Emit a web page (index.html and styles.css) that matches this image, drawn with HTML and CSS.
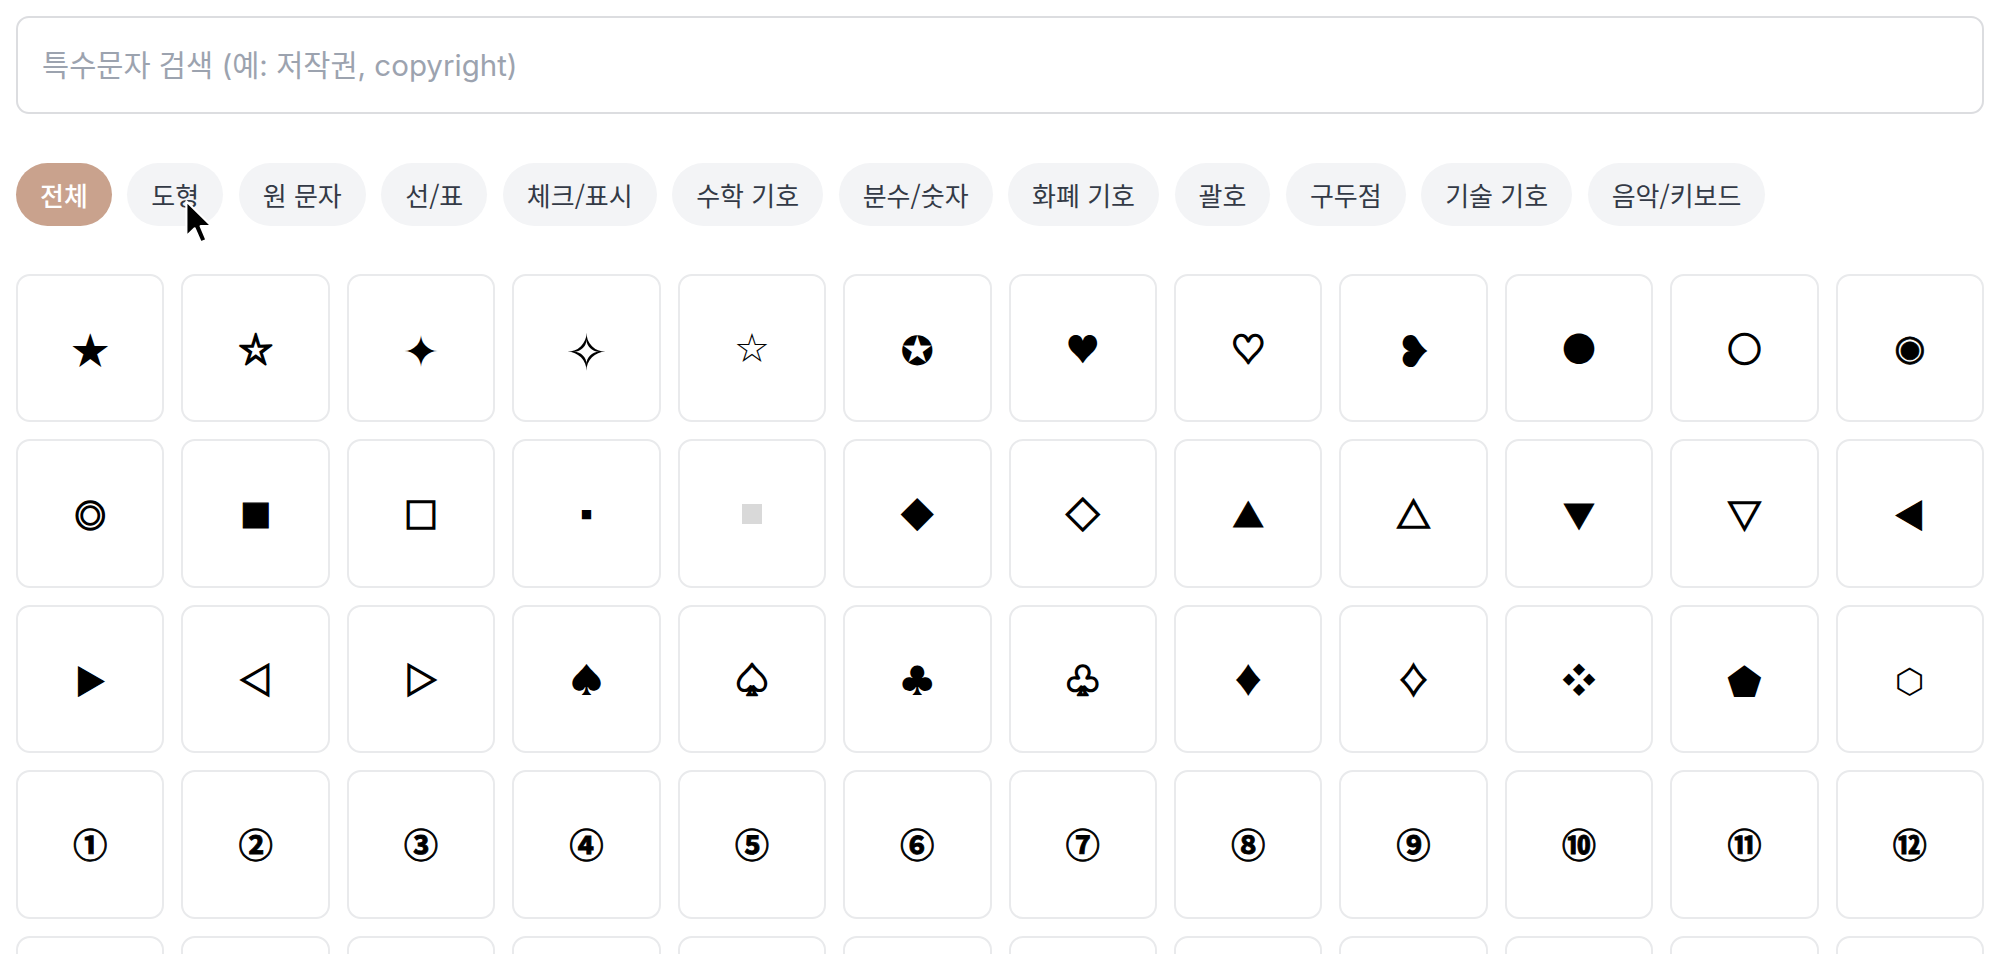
FILE: index.html
```html
<!DOCTYPE html>
<html lang="ko">
<head>
<meta charset="utf-8">
<title>특수문자</title>
<link rel="stylesheet" href="styles.css">
</head>
<body>
<main class="page">
  <input class="search" type="text" placeholder="특수문자 검색 (예: 저작권, copyright)">

  <nav class="chips">
    <button class="chip active">전체</button>
    <button class="chip">도형</button>
    <button class="chip">원 문자</button>
    <button class="chip">선/표</button>
    <button class="chip">체크/표시</button>
    <button class="chip">수학 기호</button>
    <button class="chip">분수/숫자</button>
    <button class="chip">화폐 기호</button>
    <button class="chip">괄호</button>
    <button class="chip">구두점</button>
    <button class="chip">기술 기호</button>
    <button class="chip">음악/키보드</button>
  </nav>

  <ul class="grid">
    <li class="cell star">★</li>
    <li class="cell outline">☆</li>
    <li class="cell sparkle">✦</li>
    <li class="cell sparkle-o">✧</li>
    <li class="cell star-thin">☆</li>
    <li class="cell badge">✪</li>
    <li class="cell">♥</li>
    <li class="cell outline">♡</li>
    <li class="cell bullet">❥</li>
    <li class="cell">●</li>
    <li class="cell outline">○</li>
    <li class="cell fisheye">◉</li>

    <li class="cell ring outline">◎</li>
    <li class="cell solid">■</li>
    <li class="cell outline">□</li>
    <li class="cell">▪</li>
    <li class="cell"><span class="swatch">▫</span></li>
    <li class="cell">◆</li>
    <li class="cell outline">◇</li>
    <li class="cell solid">▲</li>
    <li class="cell outline">△</li>
    <li class="cell solid">▼</li>
    <li class="cell outline">▽</li>
    <li class="cell solid">◀</li>

    <li class="cell solid">▶</li>
    <li class="cell outline">◁</li>
    <li class="cell outline">▷</li>
    <li class="cell">♠</li>
    <li class="cell outline">♤</li>
    <li class="cell">♣</li>
    <li class="cell outline">♧</li>
    <li class="cell">♦</li>
    <li class="cell outline">♢</li>
    <li class="cell">❖</li>
    <li class="cell penta">⬟</li>
    <li class="cell hexa">⬡</li>

    <li class="cell num">①</li>
    <li class="cell num">②</li>
    <li class="cell num">③</li>
    <li class="cell num">④</li>
    <li class="cell num">⑤</li>
    <li class="cell num">⑥</li>
    <li class="cell num">⑦</li>
    <li class="cell num">⑧</li>
    <li class="cell num">⑨</li>
    <li class="cell num">⑩</li>
    <li class="cell num">⑪</li>
    <li class="cell num">⑫</li>

    <li class="cell num">⑬</li>
    <li class="cell num">⑭</li>
    <li class="cell num">⑮</li>
    <li class="cell num">⑯</li>
    <li class="cell num">⑰</li>
    <li class="cell num">⑱</li>
    <li class="cell num">⑲</li>
    <li class="cell num">⑳</li>
    <li class="cell num">❶</li>
    <li class="cell num">❷</li>
    <li class="cell num">❸</li>
    <li class="cell num">❹</li>
  </ul>

  <!-- mouse pointer hovering the second category -->
  <svg class="pointer" width="31" height="46" viewBox="0 0 14 21" aria-hidden="true">
    <path d="M1 1 L1 17 L4.8 13.4 L7.6 19.8 L10.2 18.7 L7.5 12.4 L12.6 12.4 Z" fill="#000" stroke="#fff" stroke-width="1" stroke-linejoin="round"/>
  </svg>
</main>
</body>
</html>
```

FILE: styles.css
```css
* {
  box-sizing: border-box;
}

body {
  margin: 0;
  background: #ffffff;
  font-family: Inter, "Noto Sans CJK KR", sans-serif;
}

.page {
  position: relative;
  padding: 16px;
}

/* search field */
.search {
  display: block;
  width: 100%;
  height: 98px;
  padding: 0 24px;
  border: 2px solid #dcdde0;
  border-radius: 13px;
  background: #fff;
  font-family: Inter, "Noto Sans CJK KR", sans-serif;
  font-size: 29.5px;
  color: #111827;
  outline: none;
}

.search::placeholder {
  color: #9ca3af;
}

/* category filter */
.chips {
  display: flex;
  gap: 15.5px;
  margin-top: 49px;
}

.chip {
  display: inline-flex;
  align-items: center;
  height: 63px;
  padding: 0 24px;
  border: 0;
  border-radius: 999px;
  background: #f3f4f6;
  color: #333a46;
  font-family: "Noto Sans CJK KR", sans-serif;
  font-size: 26px;
  font-weight: 400;
  cursor: pointer;
}

.chip.active {
  background: #c9a28d;
  color: #ffffff;
  font-weight: 500;
}

/* symbol grid */
.grid {
  list-style: none;
  margin: 48px 0 0;
  padding: 0;
  display: grid;
  grid-template-columns: repeat(12, 1fr);
  gap: 17px;
}

.cell {
  aspect-ratio: 1 / 1;
  display: flex;
  align-items: center;
  justify-content: center;
  border: 2px solid #e9eaec;
  border-radius: 14px;
  background: #fff;
  color: #000;
  font-family: "Noto Sans CJK KR", "DejaVu Sans", sans-serif;
  font-size: 34px;
  font-weight: 700;
  line-height: 1;
  cursor: pointer;
}

/* heavier strokes for the hollow shapes */
.cell.outline {
  -webkit-text-stroke: 1.6px #000;
}

.cell.solid {
  -webkit-text-stroke: 1.2px #000;
  font-size: 31px;
}

.cell.num {
  -webkit-text-stroke: 0.9px #000;
}

.cell.star {
  font-size: 38px;
}

.cell.sparkle {
  font-size: 44px;
}

.cell.sparkle-o {
  font-size: 50px;
  font-weight: 400;
}

.cell.star-thin {
  font-family: "DejaVu Sans", sans-serif;
  font-size: 40px;
  font-weight: 400;
}

.cell.badge {
  font-size: 40px;
}

.cell.bullet {
  font-size: 44px;
}

.cell.fisheye {
  font-family: "DejaVu Sans", sans-serif;
  font-size: 36px;
  font-weight: 400;
  -webkit-text-stroke: 0.8px #000;
}

.cell.ring {
  font-size: 31px;
}

.cell.penta {
  font-size: 40px;
}

.cell.hexa {
  font-weight: 400;
}

/* light grey filled tile for the small square */
.swatch {
  display: inline-block;
  width: 20px;
  height: 20px;
  background: #d9d9d9;
  color: transparent;
  font-size: 12px;
  line-height: 20px;
  text-align: center;
}

.pointer {
  position: absolute;
  left: 184px;
  top: 199px;
}
```
